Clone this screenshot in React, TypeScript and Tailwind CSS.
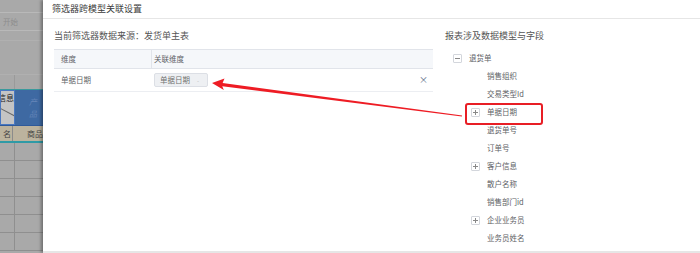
import React from "react";

const font = { fontFamily: '"Noto Sans CJK SC", "Noto Sans", sans-serif' };

function Box({ minus }: { minus?: boolean }) {
  return (
    <div className="w-[9px] h-[9px] border border-[#d3d6dc] bg-white rounded-[1px] flex items-center justify-center">
      {minus ? (
        <div className="w-[5px] h-px bg-[#888]" />
      ) : (
        <div className="relative w-[5px] h-[5px]">
          <div className="absolute left-0 top-[2px] w-[5px] h-px bg-[#888]" />
          <div className="absolute left-[2px] top-0 w-px h-[5px] bg-[#888]" />
        </div>
      )}
    </div>
  );
}

const children: { t: string; plus?: boolean }[] = [
  { t: "销售组织" },
  { t: "交易类型Id" },
  { t: "单据日期", plus: true },
  { t: "退货单号" },
  { t: "订单号" },
  { t: "客户信息", plus: true },
  { t: "散户名称" },
  { t: "销售部门id" },
  { t: "企业业务员", plus: true },
  { t: "业务员姓名" },
];

function LeftStrip() {
  return (
    <div className="w-[43px] h-full flex flex-col bg-[#a9a9a9] shrink-0 overflow-hidden">
      <div className="h-[13px] border-b border-[#b9b9b9]" />
      <div className="h-[18px] border-b border-[#b9b9b9] flex items-center pl-[3px] text-[7.5px] text-[#8d8d8d]">开始</div>
      <div className="h-[10px] border-b border-[#b0b0b0]" />
      <div className="h-[34px] border-b border-[#b0b0b0]" />
      <div className="h-[14px] flex">
        <div className="w-[15px] border-r border-[#9a9a9a]" />
      </div>
      <div className="h-px bg-[#3a9a9c]" />
      <div className="h-[35px] flex bg-[#3e69a2]">
        <div className="relative w-[15px] bg-[#c4c4c4] border border-[#4a78c0] overflow-hidden">
          <div className="text-[8px] text-[#222] leading-none mt-[3px] -ml-[3px] whitespace-nowrap">信息</div>
          <div className="absolute left-[-2px] top-[22px] w-[22px] h-px bg-[#666] rotate-[28deg]" />
        </div>
        <div className="flex-1 flex items-center pl-[14px] text-[8px] text-[#6585b8] italic">产品</div>
      </div>
      <div className="h-px bg-[#2f5a9a]" />
      <div className="h-[15px] flex bg-[#bcb39e] text-[8px] text-[#444]">
        <div className="w-[15px] border-r border-[#8b8b8b] flex items-center justify-end pr-[1px]">名</div>
        <div className="flex-1 flex items-center pl-[14px] whitespace-nowrap">商品</div>
      </div>
      <div className="h-[2px] bg-[#2f9aa6]" />
      {[0, 1, 2, 3, 4, 5].map((i) => (
        <div key={i} className="h-[18px] flex border-b border-[#8f8f8f] shrink-0">
          <div className="w-[15px] border-r border-[#8f8f8f]" />
        </div>
      ))}
    </div>
  );
}

export default function App() {
  return (
    <div className="relative w-[700px] h-[253px] flex overflow-hidden bg-white" style={font}>
      <LeftStrip />
      <div className="relative flex-1 h-full flex flex-col bg-white shadow-[-2px_0_3px_rgba(0,0,0,0.35)]">
        <div className="h-[19px] border-b border-[#e6e6e6] flex items-center pl-[9px] text-[9px] text-[#3a3a3a] shrink-0">
          筛选器跨模型关联设置
        </div>
        <div className="flex-1 flex">
          <div className="w-[390px] pl-[11px] shrink-0">
            <div className="h-[18px] mt-[8px] flex items-center text-[9px] text-[#555]">
              当前筛选器数据来源：发货单主表
            </div>
            <div className="mt-[4px] w-[379px] text-[7.5px] text-[#606266]">
              <div className="h-[20px] flex bg-[#f5f7fa] border-t border-b border-[#e1e4ea]">
                <div className="w-[98px] border-r border-[#e1e4ea] flex items-center pl-[7px]">维度</div>
                <div className="flex-1 flex items-center pl-[2px]">关联维度</div>
              </div>
              <div className="h-[23px] flex border-b border-[#eceef2]">
                <div className="w-[98px] flex items-center pl-[7px]">单据日期</div>
                <div className="flex-1 flex items-center pl-[2px]">
                  <div className="w-[54px] h-[14px] bg-[#eef0f3] border border-[#dcdfe5] rounded-[2px] flex items-center pl-[5px] text-[#707070]">
                    单据日期
                    <span className="ml-[7px] text-[6px] text-[#bbb]">-</span>
                  </div>
                </div>
                <div className="w-[14px] flex items-center text-[9px] text-[#5d6b85]">×</div>
              </div>
            </div>
          </div>
          <div className="flex-1 pl-[12px]">
            <div className="h-[18px] mt-[8px] flex items-center text-[9px] text-[#555]">报表涉及数据模型与字段</div>
            <div className="mt-[4px] text-[7.5px] text-[#606266]">
              <div className="h-[18px] flex items-center pl-[8px]">
                <Box minus />
                <span className="ml-[7px]">退货单</span>
              </div>
              {children.map((c) => (
                <div key={c.t} className="h-[18px] flex items-center pl-[26px]">
                  <div className="w-[9px]">{c.plus && <Box />}</div>
                  <span className="ml-[7px]">{c.t}</span>
                </div>
              ))}
            </div>
          </div>
        </div>
        <div className="h-[2px] bg-[#e6e6e6] shrink-0" />
      </div>
      <div className="absolute left-[465px] top-[103px] w-[78px] h-[22px] border-2 border-[#e81e25] rounded-[3px]" />
      <svg className="absolute left-0 top-0 pointer-events-none" width="700" height="253">
        <polygon
          fill="#ee1c24"
          points="212,83 224.5,78.6 222.6,82.9 462.1,115.4 461.9,116.4 222.3,86.2 223.8,90.1"
        />
      </svg>
    </div>
  );
}
